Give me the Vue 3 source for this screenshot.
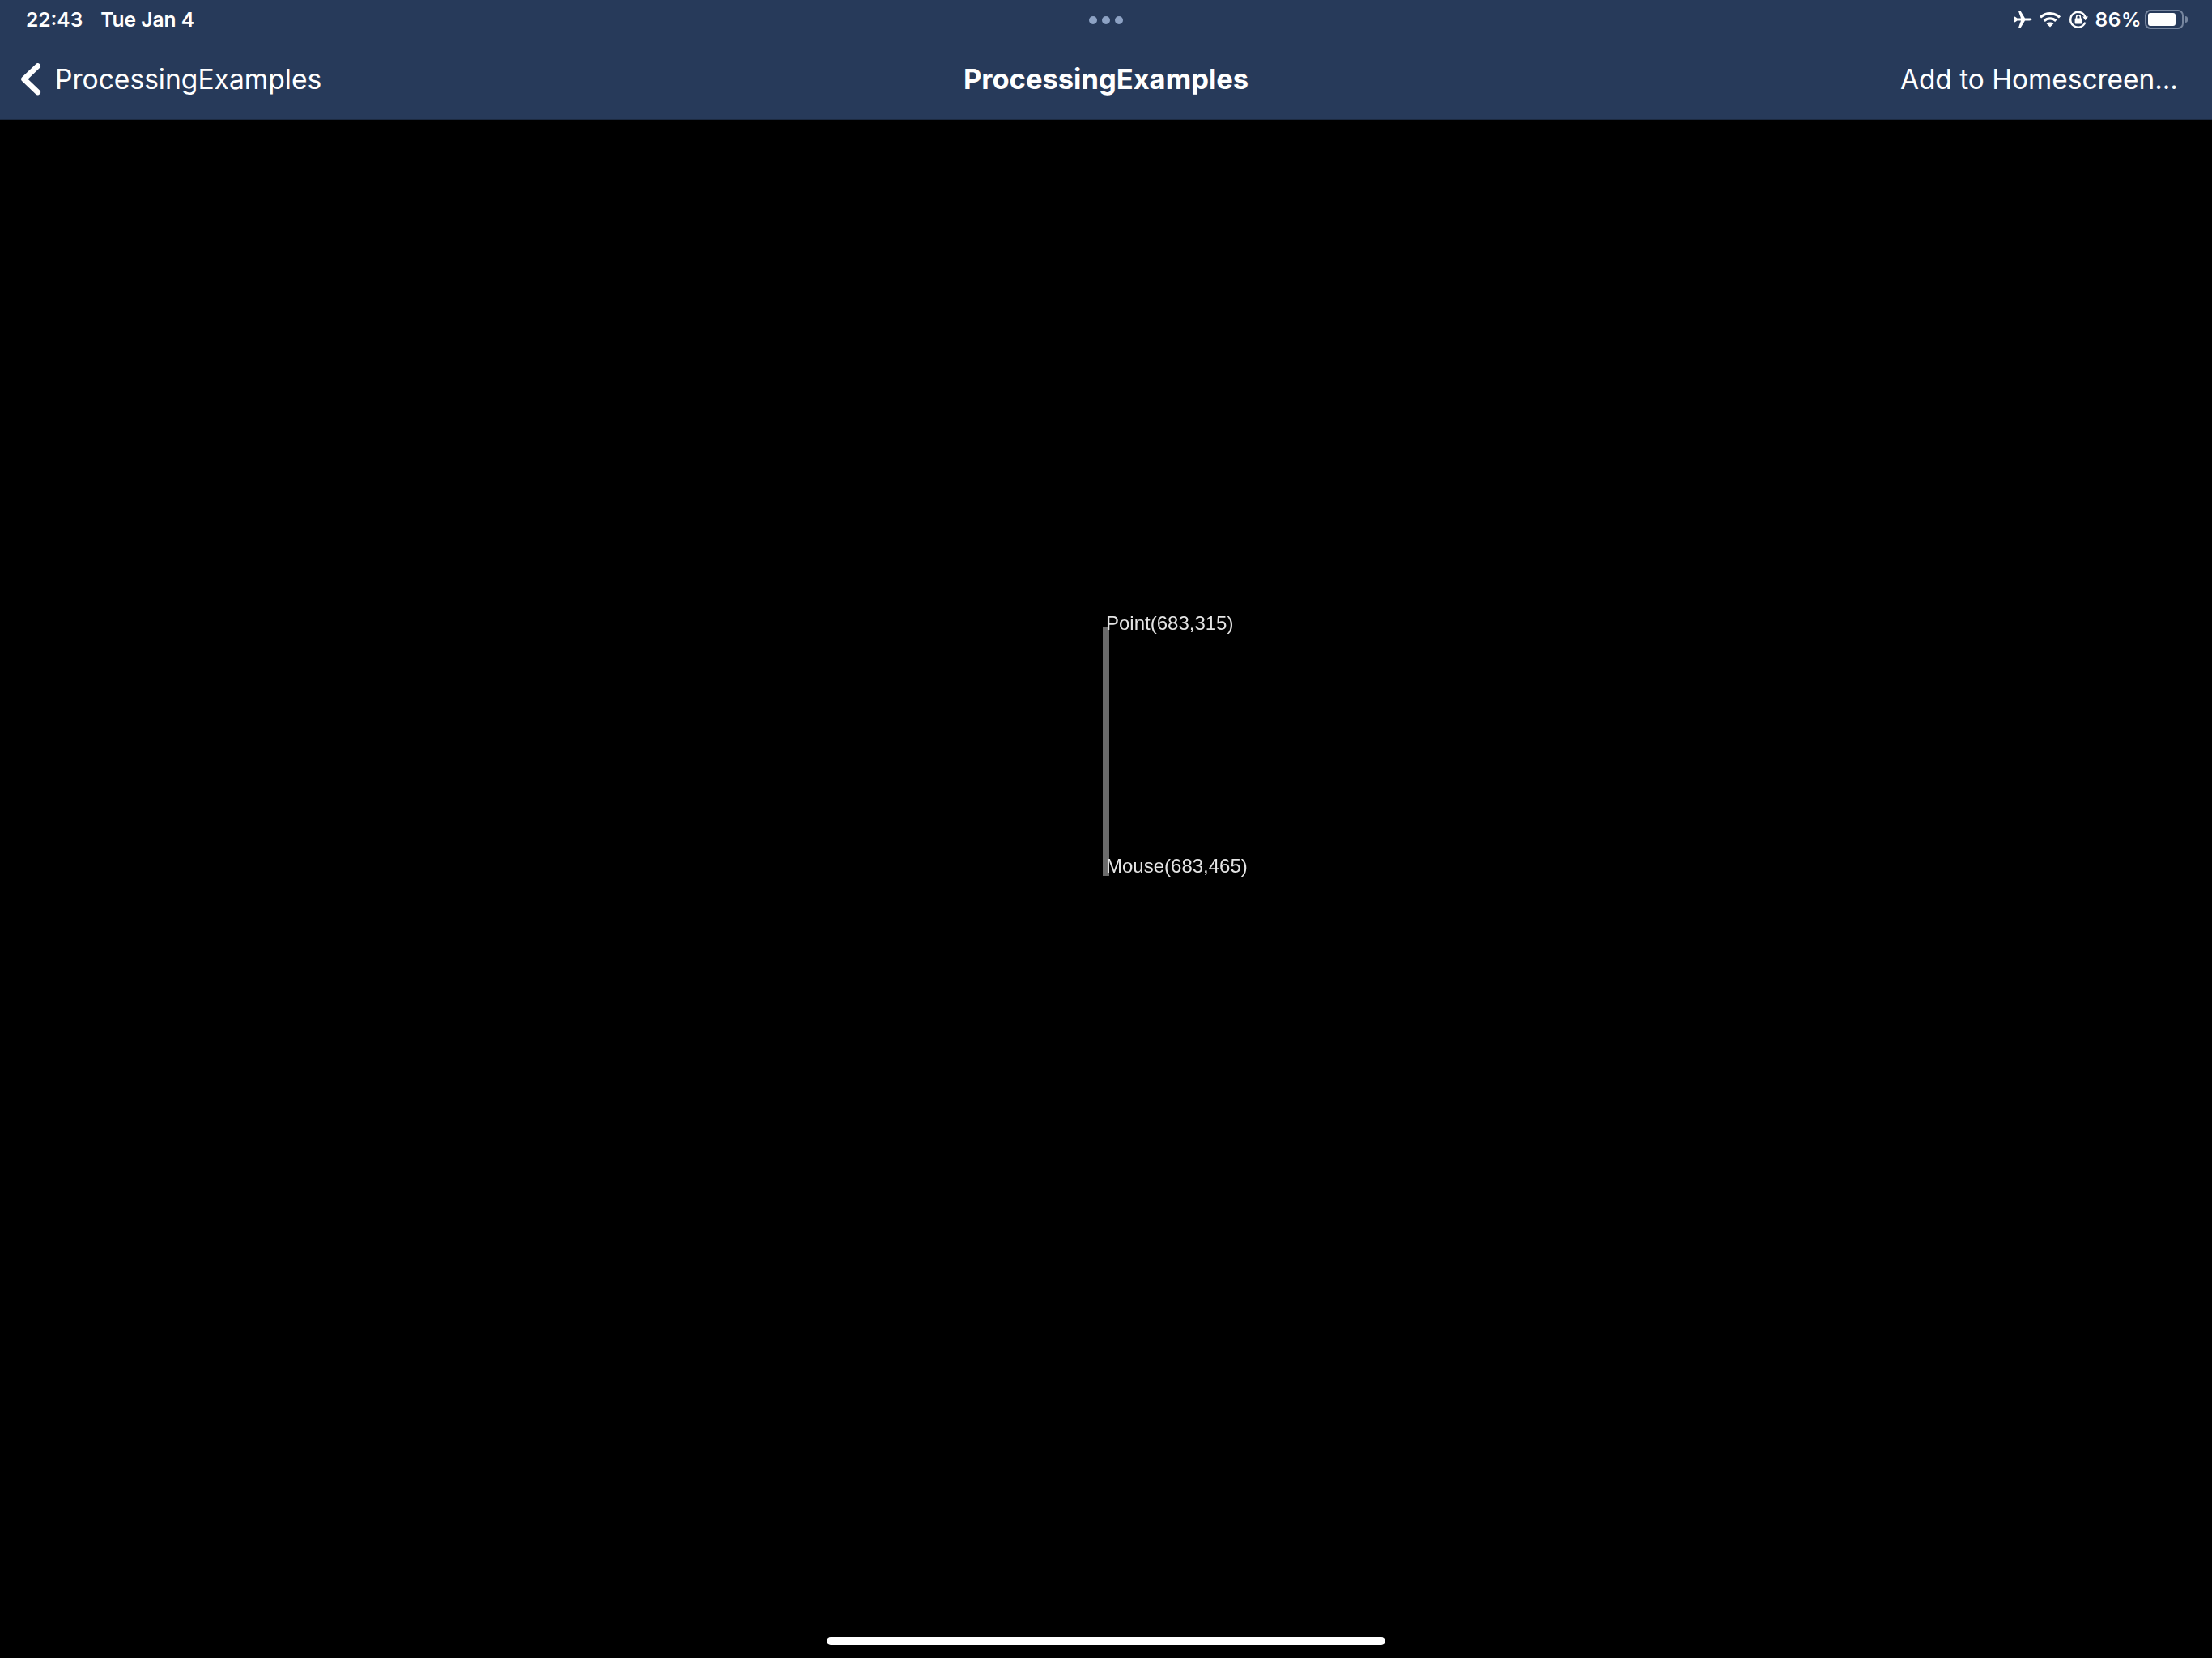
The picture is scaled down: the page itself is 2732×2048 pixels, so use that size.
<script setup>
const pointLabel = 'Point(683,315)'
const mouseLabel = 'Mouse(683,465)'
</script>

<template>
  <div class="screen">
    <header class="top">
      <div class="status">
        <div class="status-left">
          <span>22:43</span>
          <span>Tue Jan 4</span>
        </div>
        <div class="dots"><i></i><i></i><i></i></div>
        <div class="status-right">
          <svg class="ic-plane" viewBox="0 0 24 24" width="24" height="24">
            <path fill="#fff" d="M1 9.2 2.6 8.6 5.5 10.6H10L6.8 1.2H9.4L15 10.6H20.5C22.3 10.6 23.5 11.2 23.5 12S22.3 13.4 20.5 13.4H15L9.4 22.8H6.8L10 13.4H5.5L2.6 15.4 1 14.8 2.3 12Z" />
          </svg>
          <svg class="ic-wifi" viewBox="0 0 28 20" width="28" height="20">
            <path fill="none" stroke="#fff" stroke-width="3.2" d="M2 7.4C9 1 19 1 26 7.4" />
            <path fill="none" stroke="#fff" stroke-width="3.2" d="M6.7 11.8C11 8 17 8 21.3 11.8" />
            <path fill="#fff" d="M14 19.6 9.6 15.2C12 13 16 13 18.4 15.2Z" />
          </svg>
          <svg class="ic-lock" viewBox="0 0 24 24" width="24" height="24">
            <path fill="none" stroke="#fff" stroke-width="2.4" d="M20.6 9.5A9.4 9.4 0 1 0 20.4 15.6" />
            <path fill="#fff" d="M17.2 8.6H24L20.6 13.2Z" />
            <rect x="7.6" y="10.6" width="8.8" height="7" rx="1" fill="#fff" />
            <path fill="none" stroke="#fff" stroke-width="1.6" d="M9.6 11V9.2A2.4 2.4 0 0 1 14.4 9.2V11" />
          </svg>
          <span class="pct">86%</span>
          <div class="battery"><div class="level"></div></div>
          <div class="nub"></div>
        </div>
      </div>
      <nav class="nav">
        <div class="back">
          <svg viewBox="0 0 26 40" width="26" height="40">
            <path fill="none" stroke="#fff" stroke-width="6.8" stroke-linecap="round" stroke-linejoin="round" d="M21.6 3.6 4.6 19.8 21.6 36" />
          </svg>
          <span>ProcessingExamples</span>
        </div>
        <div class="title">ProcessingExamples</div>
        <div class="action">Add to Homescreen...</div>
      </nav>
    </header>

    <main class="canvas">
      <div class="line"></div>
      <div class="label label-point">{{ pointLabel }}</div>
      <div class="label label-mouse">{{ mouseLabel }}</div>
      <div class="home-bar"></div>
    </main>
  </div>
</template>

<style scoped>
.screen {
  width: 2732px;
  height: 2048px;
  display: flex;
  flex-direction: column;
  background: #000;
  font-family: Inter, "Liberation Sans", sans-serif;
  color: #fff;
  overflow: hidden;
}

.top {
  height: 148px;
  background: #273a5a;
  box-sizing: border-box;
  border-bottom: 1px solid #1d2b42;
}

.status {
  height: 48px;
  display: grid;
  grid-template-columns: 1fr auto 1fr;
  align-items: center;
  padding: 0 32px;
  font-size: 24.5px;
  font-weight: 600;
}

.status-left {
  display: flex;
  gap: 22px;
}

.dots {
  display: flex;
  gap: 6px;
  margin-top: 2px;
}

.dots i {
  width: 10px;
  height: 10px;
  border-radius: 50%;
  background: #8da2c4;
}

.status-right {
  display: flex;
  align-items: center;
  justify-content: flex-end;
  gap: 9px;
  margin-right: -2px;
}

.ic-plane {
  margin-right: -1px;
}

.pct {
  letter-spacing: 0.5px;
}

.battery {
  width: 48px;
  height: 24px;
  box-sizing: border-box;
  border: 2px solid #77869f;
  border-radius: 7px;
  padding: 2px;
  margin-left: -5px;
}

.level {
  width: 34px;
  height: 16px;
  background: #fff;
  border-radius: 3px;
}

.nub {
  width: 3px;
  height: 8px;
  background: #77869f;
  border-radius: 0 3px 3px 0;
  margin-left: -7px;
}

.nav {
  height: 99px;
  display: grid;
  grid-template-columns: 1fr auto 1fr;
  align-items: center;
  padding: 0 42px;
  box-sizing: border-box;
  font-size: 33.6px;
}

.back {
  display: flex;
  align-items: center;
  gap: 17px;
  margin-left: -17px;
}

.title {
  font-size: 34.5px;
  font-weight: 700;
}

.action {
  font-size: 33.4px;
  text-align: right;
}

.canvas {
  flex: 1;
  position: relative;
}

.line {
  position: absolute;
  left: 1362px;
  top: 626px;
  width: 8px;
  height: 308px;
  background: #6a6a6a;
}

.label {
  position: absolute;
  left: 1366px;
  font-family: "Liberation Sans", Arial, sans-serif;
  font-size: 24px;
  line-height: 28px;
  color: #e4e4e4;
  filter: blur(0.4px);
}

.label-point {
  top: 608px;
}

.label-mouse {
  top: 908px;
}

.home-bar {
  position: absolute;
  left: 1021px;
  bottom: 16px;
  width: 690px;
  height: 10px;
  background: #fff;
  border-radius: 5px;
}
</style>
